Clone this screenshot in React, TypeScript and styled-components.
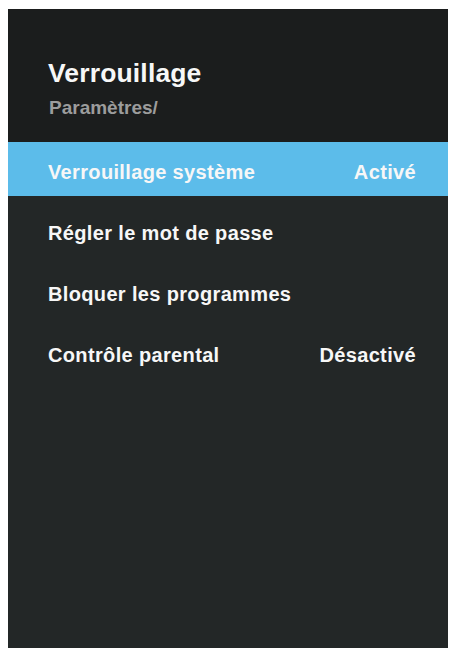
import React from "react";
import styled, { createGlobalStyle } from "styled-components";

const Global = createGlobalStyle`
  html, body { margin: 0; padding: 0; background: #ffffff; }
  body { font-family: "Liberation Sans", Arial, sans-serif; }
`;

const Screen = styled.div`
  margin: 9px 3px 0 8px;
  height: 639px;
  background: #232727;
  display: flex;
  flex-direction: column;
  overflow: hidden;
`;

const Header = styled.header`
  background: #1b1d1d;
  padding: 51px 40px 25px 40px;
  display: flex;
  flex-direction: column;
  gap: 11px;
`;

const Title = styled.h1`
  margin: 0;
  font-size: 26.5px;
  line-height: 1;
  font-weight: 700;
  letter-spacing: 0.15px;
  color: #f7f7f7;
`;

const Breadcrumb = styled.div`
  font-size: 19px;
  line-height: 1;
  font-weight: 700;
  padding-left: 1px;
  color: #9c9c9c;
`;

const List = styled.ul`
  list-style: none;
  margin: 0;
  padding: 0;
  display: flex;
  flex-direction: column;
  gap: 7.3px;
`;

const Row = styled.li<{ $active?: boolean }>`
  height: 54px;
  box-sizing: border-box;
  padding: 6px 32px 0 40px;
  line-height: 48px;
  display: flex;
  justify-content: space-between;
  font-size: 20px;
  font-weight: 700;
  letter-spacing: 0.35px;
  color: #f7f7f7;
  background: ${(p) => (p.$active ? "#5cbcea" : "transparent")};
`;

const Value = styled.span`
  white-space: nowrap;
`;

const items = [
  { label: "Verrouillage système", value: "Activé", active: true },
  { label: "Régler le mot de passe" },
  { label: "Bloquer les programmes" },
  { label: "Contrôle parental", value: "Désactivé" },
];

export default function App() {
  return (
    <>
      <Global />
      <Screen>
        <Header>
          <Title>Verrouillage</Title>
          <Breadcrumb>Paramètres/</Breadcrumb>
        </Header>
        <List>
          {items.map((it) => (
            <Row key={it.label} $active={it.active}>
              <span>{it.label}</span>
              {it.value && <Value>{it.value}</Value>}
            </Row>
          ))}
        </List>
      </Screen>
    </>
  );
}
